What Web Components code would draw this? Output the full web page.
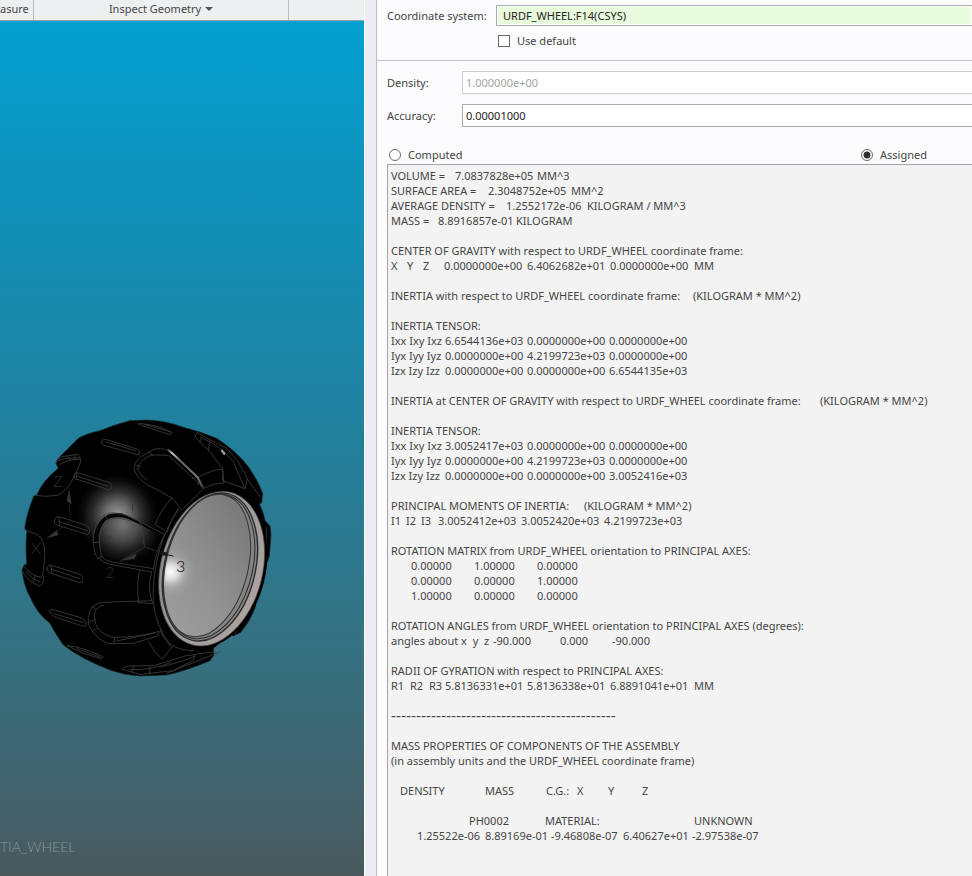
<!DOCTYPE html>
<html lang="en">
<head>
<meta charset="utf-8">
<title>Mass Properties</title>
<style>
html, body { margin: 0; height: 100%; }
body { font: 11px/15px "Noto Sans", "Open Sans", sans-serif; color: #454545; background: #ecedf0; overflow: hidden; }
</style>
</head>
<body>
<mass-app></mass-app>

<template id="t-app">
<style>
:host { display: grid; grid-template-columns: minmax(0, 364fr) 12px minmax(0, 596fr); height: 100vh; }
.left { display: flex; flex-direction: column; min-height: 0; }
.gutter { background: #ecedf0; border-left: 1px solid #fff; }
</style>
<div class="left"><ribbon-bar></ribbon-bar><model-view></model-view></div>
<div class="gutter"></div>
<mass-dialog></mass-dialog>
</template>

<template id="t-ribbon">
<style>
:host { display: flex; height: 20px; background: #eeeff1; border-bottom: 1px solid #8fa9a8; }
button { font: inherit; line-height: 17px; color: inherit; background: none; border: 0; border-right: 1px solid #b9babd; margin: 0; padding: 0 0 3px; }
.measure { flex: 33 1 0; text-align: left; }
.inspect { flex: 255 1 0; display: flex; align-items: center; justify-content: center; gap: 4px; }
.rest { flex: 75 1 0; }
</style>
<button class="measure" aria-label="Measure">asure</button>
<button class="inspect">Inspect Geometry<svg width="8" height="4" viewBox="0 0 8 4" aria-hidden="true"><path d="M0 0H8L4 4Z" fill="#555"/></svg></button>
<div class="rest"></div>
</template>

<template id="t-model">
<style>
:host { display: block; flex: 1; min-height: 0; background: linear-gradient(#039fd0, #2082a0 45%, #36707f 75%, #465e66 95%, #4a585c); }
svg { display: block; width: 100%; height: 100%; }
text { font-family: "Lato", "Noto Sans", sans-serif; font-weight: 300; }
</style>
<svg viewBox="0 0 364 855" preserveAspectRatio="xMinYMin meet" role="img" aria-label="Wheel model">
<defs>
<radialGradient id="glow"><stop offset="0" stop-color="#9a9a9a"/><stop offset=".3" stop-color="#6a6a6a"/><stop offset=".6" stop-color="#2c2c2c"/><stop offset=".85" stop-color="#0a0a0a"/><stop offset="1" stop-color="#000"/></radialGradient>
<radialGradient id="pocket" gradientUnits="userSpaceOnUse" cx="368" cy="372" r="115"><stop offset="0" stop-color="#747474"/><stop offset=".4" stop-color="#4c4c4c"/><stop offset=".75" stop-color="#1a1a1a"/><stop offset="1" stop-color="#020202"/></radialGradient>
<radialGradient id="shine" gradientUnits="userSpaceOnUse" cx="512" cy="516" r="75"><stop offset="0" stop-color="#fff"/><stop offset=".3" stop-color="#eee" stop-opacity=".8"/><stop offset=".65" stop-color="#bbb" stop-opacity=".35"/><stop offset="1" stop-color="#aaa" stop-opacity="0"/></radialGradient>
<linearGradient id="disc" x1="0" y1="1" x2=".5" y2="0"><stop offset="0" stop-color="#a0a0a0"/><stop offset=".5" stop-color="#929292"/><stop offset="1" stop-color="#7c7c7c"/></linearGradient>
<linearGradient id="rim" x1="0" y1="0" x2="1" y2=".3"><stop offset="0" stop-color="#8a8a8a"/><stop offset=".5" stop-color="#999"/><stop offset="1" stop-color="#aaa29f"/></linearGradient>
<linearGradient id="hl" gradientUnits="userSpaceOnUse" x1="500" y1="148" x2="612" y2="262"><stop offset="0" stop-color="#333"/><stop offset=".12" stop-color="#ccc"/><stop offset=".35" stop-color="#666"/><stop offset=".8" stop-color="#777"/><stop offset="1" stop-color="#333"/></linearGradient>
<clipPath id="face"><ellipse cx="624" cy="498" rx="124" ry="219" transform="rotate(14 624 498)"/></clipPath>
</defs>
<g transform="translate(0 379) scale(.33333)" fill="none" stroke-linecap="round" stroke-linejoin="round">
<path fill="#000" stroke="#17252a" stroke-width="2" d="M390 62L440 60Q500 62 550 82Q600 94 650 115Q705 150 745 200Q775 243 788 280L785 308L778 312Q792 340 795 362L810 378L813 405L808 470L800 490L792 492Q785 540 768 604L766 622Q750 665 722 697L700 708L690 702Q665 725 640 745L642 765L630 782Q560 812 500 825L420 828Q370 825 330 810Q240 775 190 735Q165 700 150 670Q110 640 90 590Q72 560 66 510L72 495L80 493Q76 440 80 393L74 385Q80 340 102 287L110 285Q130 240 175 205L168 190L172 178Q200 150 235 115Q260 100 300 92Q340 75 390 62Z"/>
<circle cx="352" cy="345" r="122" fill="url(#glow)"/>
<path fill="#000" d="M285 480Q270 400 303 360Q325 335 365 340L492 402L480 440L455 510L430 515L325 490Z"/>
<path fill="url(#pocket)" d="M300 465Q284 395 316 362Q340 345 385 356L484 406L450 508L330 487Q308 483 300 465Z"/>
<path stroke="#080808" stroke-width="6" d="M292 462Q280 390 312 356Q328 341 365 347L420 367"/>
<g stroke="#3d3d3d" stroke-width="2.5">
<path d="M285 462C272 405 285 365 312 345C332 334 360 340 383 347L492 402M305 470C288 410 305 374 325 361C340 352 365 352 400 366M285 462Q298 482 325 492L455 516M305 470Q315 482 335 486L460 506"/>
<path d="M312 345L325 361M281 428L300 426M291 477L308 468M418 365L430 382V430M420 508Q408 550 416 610M455 516Q440 560 458 610M495 402Q468 450 460 510"/>
<path d="M404 215C396 190 418 168 450 155C470 140 495 146 515 156L592 231L612 264L548 328M404 215Q418 247 470 268L517 295L545 330M412 207Q425 232 440 240M413 206C418 184 440 167 461 165L505 166L580 234L610 266M408 196L421 201M447 156L459 166M590 232L577 235M605 243L592 252"/>
<path d="M516 294Q480 330 466 374L493 390M536 330Q510 360 501 398M595 232Q640 207 668 208L672 248Q640 250 612 264"/>
<path d="M591 98L585 107Q595 126 627 151L668 207V242L735 266L742 236Q720 185 680 145Q640 125 591 98M602 112Q660 135 700 185L735 266M603 115L600 126M630 120L625 150M742 238L780 290"/>
<path d="M418 70Q480 76 516 98L511 104Q460 90 414 72M435 74L512 95"/>
<path d="M304 126Q307 116 320 119L411 147Q423 153 418 162Q412 168 400 160L318 138Q304 135 304 126ZM317 126L407 152"/>
<path d="M221 231Q220 216 235 219L330 248Q338 255 333 266Q325 273 310 264L235 239Q224 238 221 231ZM233 229L322 258M231 220L228 240"/>
<path d="M163 365Q163 348 181 351L258 376Q270 382 269 393L264 404L180 378Q165 375 163 365ZM178 365L262 392M176 351L180 378"/>
<path d="M141 508Q140 493 155 496L240 523Q252 530 246 546Q240 552 228 544L155 521Q143 518 141 508ZM155 508L238 536M152 497L156 520"/>
<path d="M149 635Q148 625 160 629L249 655Q260 661 259 676Q250 681 232 673L170 653Q155 648 149 635ZM163 641L251 668"/>
<path d="M202 737Q245 740 309 770L304 776Q250 765 202 737M230 746L300 771"/>
<path d="M168 190Q170 170 198 168L234 163Q245 174 240 192C220 240 200 275 172 286Q140 292 105 286M180 193Q205 178 237 178M171 181Q200 173 240 173M202 169L210 181M222 165L226 177"/>
<path d="M80 393Q118 400 126 420C140 440 133 500 128 520C133 540 130 555 117 558Q82 542 67 515M79 515Q98 540 120 545M72 500Q95 530 125 532M106 525L101 545"/>
<path d="M265 668C262 630 280 610 310 607L455 602M285 665C280 635 288 617 312 616M265 668C270 695 300 722 325 731L400 730L472 708L478 694Q420 712 340 712C310 705 290 688 285 665M276 617L287 628M269 665L286 659M277 693L293 684M344 713L341 732M415 607L455 611M350 723L466 698"/>
<path d="M445 723Q460 755 486 778L515 742M480 688Q488 715 515 742M367 808Q372 796 400 798L465 796L555 768L642 755M367 808L420 823L520 812L580 781L584 766M401 799L397 813M450 798L449 821M480 801Q550 786 585 768M390 809Q450 812 515 787"/>
<path d="M800 382L798 486M766 612L705 702M660 755Q600 780 500 820"/>
<path d="M535 325Q500 380 480 445Q456 530 460 605Q467 680 510 732Q540 752 580 752"/>
</g>
<path stroke="#222" stroke-width="2" d="M205 270L212 365L140 415"/>
<path fill="#353535" d="M207 268L200 303L215 313ZM140 415L170 391L176 405ZM362 482L410 460L404 477ZM484 455L500 460L496 467L482 463Z"/>
<path stroke="#303030" stroke-width="2.5" d="M398 312V332M430 382L434 441M362 482L434 441L490 460M512 465L519 468M316 425L322 415M325 415L334 408"/>
<path stroke="url(#hl)" stroke-width="6" d="M505 150Q515 158 525 167L592 231L607 260"/>
<path stroke="#999" stroke-width="7" d="M666 152L673 161"/>
<g transform="rotate(14 635 506)">
<ellipse cx="635" cy="506" rx="162" ry="241" fill="#000"/>
<ellipse cx="635" cy="506" rx="153" ry="236" fill="url(#rim)" stroke="#444" stroke-width="2"/>
</g>
<g transform="rotate(14 630 501)">
<ellipse cx="630" cy="501" rx="136" ry="226" fill="#858585" stroke="#2b2b2b" stroke-width="4"/>
<ellipse cx="627" cy="500" rx="130" ry="221" stroke="#292929" stroke-width="3"/>
</g>
<g transform="rotate(14 624 498)"><ellipse cx="621" cy="497" rx="123" ry="218" fill="url(#disc)" stroke="#333" stroke-width="3"/></g>
<g clip-path="url(#face)"><circle cx="512" cy="516" r="75" fill="url(#shine)"/></g>
<path stroke="#181818" stroke-width="3" d="M478 459L519 468"/>
<path fill="#181818" d="M484 453L504 459L500 468L482 465Z"/>
</g>
<g fill="#303030" font-size="16"><text x="53" y="466">Z</text><text x="31" y="533">X</text><text x="105" y="557">2</text><text x="176" y="551" fill="#000">3</text></g>
<text x="0" y="831" font-size="14" fill="#89979b">TIA_WHEEL</text>
</svg>
</template>

<template id="t-dialog">
<style>
:host { display: flex; flex-direction: column; min-height: 0; background: #fbfbfe; border-left: 1px solid #bfc0c4; }
.ref { display: flex; flex-direction: column; gap: 7px; padding: 5px 0 12px 10px; border-bottom: 1px solid #c2c4c8; }
.fields { display: flex; flex-direction: column; gap: 10px; padding: 10px 0 20px 10px; }
.ref > choice-option { margin-left: 111px; }
.modes { display: flex; height: 16px; padding: 0 0 1px 12px; }
.modes > * { flex: 472 1 0; }
.modes > :last-child { flex-grow: 111; }
mass-report { flex: 1; margin-left: 10px; }
</style>
<div class="ref">
<labelled-field label="Coordinate system:" value="URDF_WHEEL:F14(CSYS)" kind="reference"></labelled-field>
<choice-option type="checkbox" label="Use default"></choice-option>
</div>
<div class="fields">
<labelled-field label="Density:" value="1.000000e+00" kind="off"></labelled-field>
<labelled-field label="Accuracy:" value="0.00001000"></labelled-field>
</div>
<div class="modes" role="radiogroup">
<choice-option type="radio" label="Computed"></choice-option>
<choice-option type="radio" label="Assigned" checked></choice-option>
</div>
<mass-report></mass-report>
</template>

<template id="t-field">
<style>
:host { display: flex; align-items: center; }
label { flex: 0 0 75px; }
input { flex: 1; min-width: 0; height: 23px; box-sizing: border-box; margin: 0; font: inherit; color: #222; background: #fff; border: 1px solid #a9abae; border-right: 0; border-radius: 0; padding: 0 3px; }
:host([kind=off]) input { color: #a3a3a3; border-color: #cdcdd0; }
:host([kind=reference]) label { flex-basis: 109px; }
:host([kind=reference]) input { height: 21px; padding: 0 6px; background: #e8fbdc; box-shadow: inset 0 0 0 1px #fff; }
</style>
<label for="f"></label><input id="f" type="text">
</template>

<template id="t-choice">
<style>
:host { display: flex; }
label { display: flex; align-items: center; gap: 7px; height: 15px; }
input { appearance: none; box-sizing: border-box; width: 12px; height: 12px; margin: 0; border: 1px solid #68696c; background: #fff; }
input[type=radio] { border-radius: 50%; }
input[type=radio]:checked { background: radial-gradient(circle, #303030 3px, #fff 4px); }
</style>
<label><input><span></span></label>
</template>

<template id="t-report">
<style>
:host { display: block; min-height: 0; overflow: hidden; background: #f3f3f3; border: 1px solid #a3a4a6; border-width: 1px 0 0 1px; padding: 3px 0 0 3px; }
.line { display: flex; min-height: 15px; white-space: pre; }
.line span { flex: none; }
table { border-collapse: collapse; table-layout: fixed; width: 100%; }
td { padding: 0; height: 15px; text-align: left; white-space: pre; }
.rule { font: 15px/15px "Liberation Sans", sans-serif; }
</style>
</template>

<script>
const define = (name, template, setup) => customElements.define(name, class extends HTMLElement {
  connectedCallback() {
    if (this.shadowRoot) return;
    const root = this.attachShadow({ mode: 'open' });
    root.append(document.getElementById(template).content.cloneNode(true));
    if (setup) setup(this, root);
  }
});

define('ribbon-bar', 't-ribbon');
define('model-view', 't-model');

define('labelled-field', 't-field', (host, root) => {
  const input = root.querySelector('input');
  root.querySelector('label').textContent = host.getAttribute('label');
  input.value = host.getAttribute('value');
  input.disabled = host.getAttribute('kind') === 'off';
});

define('choice-option', 't-choice', (host, root) => {
  const input = root.querySelector('input');
  input.type = host.getAttribute('type');
  input.checked = host.hasAttribute('checked');
  root.querySelector('span').textContent = host.getAttribute('label');
});

// Each block is a line (tab stops + texts) or a table (tab stops + rows).
const tensor = rows => ({ stops: [0, 54, 136, 218], rows });
const report = [
  { stops: [0, 64, 146], line: ['VOLUME =', '7.0837828e+05', 'MM^3'] },
  { stops: [0, 97, 180], line: ['SURFACE AREA =', '2.3048752e+05', 'MM^2'] },
  { stops: [0, 115, 196], line: ['AVERAGE DENSITY =', '1.2552172e-06', 'KILOGRAM / MM^3'] },
  { stops: [0, 47, 125], line: ['MASS =', '8.8916857e-01', 'KILOGRAM'] },
  '',
  'CENTER OF GRAVITY with respect to URDF_WHEEL coordinate frame:',
  { stops: [0, 16, 32, 53, 136, 219, 303], line: ['X', 'Y', 'Z', '0.0000000e+00', '6.4062682e+01', '0.0000000e+00', 'MM'] },
  '',
  { stops: [0, 302], line: ['INERTIA with respect to URDF_WHEEL coordinate frame:', '(KILOGRAM * MM^2)'] },
  '',
  'INERTIA TENSOR:',
  tensor([['Ixx Ixy Ixz', '6.6544136e+03', '0.0000000e+00', '0.0000000e+00'],
    ['Iyx Iyy Iyz', '0.0000000e+00', '4.2199723e+03', '0.0000000e+00'],
    ['Izx Izy Izz', '0.0000000e+00', '0.0000000e+00', '6.6544135e+03']]),
  '',
  { stops: [0, 429], line: ['INERTIA at CENTER OF GRAVITY with respect to URDF_WHEEL coordinate frame:', '(KILOGRAM * MM^2)'] },
  '',
  'INERTIA TENSOR:',
  tensor([['Ixx Ixy Ixz', '3.0052417e+03', '0.0000000e+00', '0.0000000e+00'],
    ['Iyx Iyy Iyz', '0.0000000e+00', '4.2199723e+03', '0.0000000e+00'],
    ['Izx Izy Izz', '0.0000000e+00', '0.0000000e+00', '3.0052416e+03']]),
  '',
  { stops: [0, 193], line: ['PRINCIPAL MOMENTS OF INERTIA:', '(KILOGRAM * MM^2)'] },
  { stops: [0, 15, 30, 47, 130, 213], line: ['I1', 'I2', 'I3', '3.0052412e+03', '3.0052420e+03', '4.2199723e+03'] },
  '',
  'ROTATION MATRIX from URDF_WHEEL orientation to PRINCIPAL AXES:',
  { stops: [0, 20, 83, 146], rows: [['', '0.00000', '1.00000', '0.00000'], ['', '0.00000', '0.00000', '1.00000'], ['', '1.00000', '0.00000', '0.00000']] },
  '',
  'ROTATION ANGLES from URDF_WHEEL orientation to PRINCIPAL AXES (degrees):',
  { stops: [0, 102, 169, 221], line: ['angles about x  y  z', '-90.000', '0.000', '-90.000'] },
  '',
  'RADII OF GYRATION with respect to PRINCIPAL AXES:',
  { stops: [0, 19, 38, 54, 136, 219, 303], line: ['R1', 'R2', 'R3', '5.8136331e+01', '5.8136338e+01', '6.8891041e+01', 'MM'] },
  '',
  { rule: 45 },
  '',
  'MASS PROPERTIES OF COMPONENTS OF THE ASSEMBLY',
  '(in assembly units and the URDF_WHEEL coordinate frame)',
  '',
  { stops: [0, 9, 94, 155, 186, 217, 251], rows: [['', 'DENSITY', 'MASS', 'C.G.:', 'X', 'Y', 'Z']] },
  '',
  { stops: [0, 78, 154, 303], rows: [['', 'PH0002', 'MATERIAL:', 'UNKNOWN']] },
  { stops: [0, 26, 94, 160, 232, 301], rows: [['', '1.25522e-06', '8.89169e-01', '-9.46808e-07', '6.40627e+01', '-2.97538e-07']] }
];

const el = (tag, text) => { const e = document.createElement(tag); if (text) e.textContent = text; return e; };
const widthAt = (stops, i) => i + 1 < stops.length ? stops[i + 1] - stops[i] + 'px' : 'auto';

define('mass-report', 't-report', (host, root) => {
  for (const block of report) {
    if (block.rows) {
      const table = el('table'), cols = el('colgroup'), body = el('tbody');
      block.stops.forEach((_, i) => { const c = el('col'); c.style.width = widthAt(block.stops, i); cols.append(c); });
      for (const row of block.rows) {
        const tr = el('tr');
        tr.append(...row.map(text => el('td', text)));
        body.append(tr);
      }
      table.append(cols, body);
      root.append(table);
      continue;
    }
    const line = el('div');
    line.className = 'line';
    if (block.rule) { line.classList.add('rule'); line.textContent = '-'.repeat(block.rule); }
    else if (block.line) block.line.forEach((text, i) => { const s = el('span', text); s.style.width = widthAt(block.stops, i); line.append(s); });
    else line.textContent = block;
    root.append(line);
  }
});

define('mass-dialog', 't-dialog');
define('mass-app', 't-app');
</script>
</body>
</html>
